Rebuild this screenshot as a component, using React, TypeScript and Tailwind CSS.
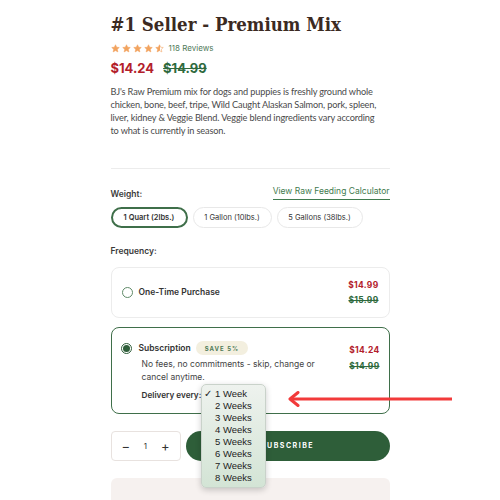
import React from "react";

const sans = "font-[family-name:'Inter','Liberation_Sans',sans-serif]";

function Star({ half = false }: { half?: boolean }) {
  return (
    <svg width="9" height="9" viewBox="0 0 24 24">
      <defs>
        <linearGradient id="halfStar">
          <stop offset="50%" stopColor="#f2a35e" />
          <stop offset="50%" stopColor="transparent" />
        </linearGradient>
      </defs>
      <path
        d="M12 2l3 6.5 7 .8-5.2 4.8 1.5 7L12 17.6 5.7 21.1l1.5-7L2 9.3l7-.8z"
        fill={half ? "url(#halfStar)" : "#f2a35e"}
        stroke="#f2a35e"
        strokeWidth="1.5"
        strokeLinejoin="round"
      />
    </svg>
  );
}

export default function App() {
  const weeks = ["1 Week", "2 Weeks", "3 Weeks", "4 Weeks", "5 Weeks", "6 Weeks", "7 Weeks", "8 Weeks"];
  return (
    <div className={`relative w-[500px] h-[500px] overflow-hidden bg-white ${sans}`}>
      <div className="mx-auto w-[279px] pt-[12px] flex flex-col">
        <h1 className="font-[family-name:'DejaVu_Serif_Condensed','DejaVu_Serif',serif] font-stretch-condensed font-bold text-[18.5px] leading-[26px] text-[#3b2a22] whitespace-nowrap">
          #1 Seller - Premium Mix
        </h1>
        <div className="flex items-center gap-[2px] mt-[4px]">
          <Star />
          <Star />
          <Star />
          <Star />
          <Star half />
          <span className="ml-[3px] text-[8px] text-[#4f7a58]">118 Reviews</span>
        </div>
        <div className="flex items-center gap-[9px] mt-[5px] text-[13px] font-bold">
          <span className="text-[#b3202b]">$14.24</span>
          <span className="text-[#2f6a3e] line-through">$14.99</span>
        </div>
        <p className="mt-[6px] font-[family-name:'Lato',sans-serif] text-[9.2px] leading-[13px] tracking-[-0.15px] text-[#4a4a4a] whitespace-nowrap">
          BJ's Raw Premium mix for dogs and puppies is freshly ground whole
          <br />
          chicken, bone, beef, tripe, Wild Caught Alaskan Salmon, pork, spleen,
          <br />
          liver, kidney &amp; Veggie Blend. Veggie blend ingredients vary according
          <br />
          to what is currently in season.
        </p>
        <div className="mt-[31px] h-px bg-[#ececec]" />

        <div className="mt-[16px] flex items-end justify-between">
          <span className="text-[8.5px] font-semibold text-[#3a3a3a]">Weight:</span>
          <span className="text-[8.5px] text-[#3f7a4e] border-b border-[#3f7a4e] pb-[2px]">View Raw Feeding Calculator</span>
        </div>
        <div className="mt-[7px] flex gap-[5px] text-[7.5px] text-[#333]">
          <div className="h-[21px] w-[77px] rounded-full border-2 border-[#3f6f4a] flex items-center justify-center font-semibold">1 Quart (2lbs.)</div>
          <div className="h-[21px] w-[79px] rounded-full border border-[#e8e8e8] flex items-center justify-center">1 Gallon (10lbs.)</div>
          <div className="h-[21px] w-[86px] rounded-full border border-[#e8e8e8] flex items-center justify-center">5 Gallons (38lbs.)</div>
        </div>

        <span className="mt-[17px] text-[8.5px] font-semibold text-[#3a3a3a]">Frequency:</span>

        <div className="mt-[9px] h-[51px] rounded-[8px] border border-[#ececec] flex items-center px-[10px]">
          <div className="w-[11px] h-[11px] rounded-full border border-[#5f8a68]" />
          <span className="ml-[6px] text-[8.5px] font-semibold text-[#333]">One-Time Purchase</span>
          <div className="ml-auto flex flex-col items-end gap-[2px] text-[8.5px] font-bold tracking-[0.3px]">
            <span className="text-[#b3202b]">$14.99</span>
            <span className="text-[#2f6a3e] line-through">$15.99</span>
          </div>
        </div>

        <div className="mt-[9px] h-[87px] rounded-[8px] border border-[#3f6f4a] px-[9px] pt-[13px] flex">
          <div className="w-[11px] h-[11px] mt-[2px] rounded-full border border-[#2f5e3a] flex items-center justify-center">
            <div className="w-[7px] h-[7px] rounded-full bg-[#2f5e3a]" />
          </div>
          <div className="ml-[7px] flex flex-col">
            <div className="flex items-center gap-[5px]">
              <span className="text-[8.5px] font-semibold text-[#333]">Subscription</span>
              <span className="h-[14px] px-[9px] rounded-full bg-[#f3efdf] text-[6px] font-bold tracking-[1px] text-[#4f7a58] flex items-center">SAVE 5%</span>
            </div>
            <p className="mt-[3px] ml-[3px] w-[180px] text-[8.5px] leading-[13px] text-[#444]">
              No fees, no commitments - skip, change or cancel anytime.
            </p>
            <span className="mt-[5px] ml-[3px] text-[8.2px] font-semibold text-[#333]">Delivery every:</span>
          </div>
          <div className="ml-auto mt-[3px] flex flex-col items-end gap-[3px] text-[8.5px] font-bold tracking-[0.3px]">
            <span className="text-[#b3202b]">$14.24</span>
            <span className="text-[#2f6a3e] line-through">$14.99</span>
          </div>
        </div>

        <div className="mt-[17px] flex gap-[5px]">
          <div className="w-[70px] h-[30px] rounded-[4px] border border-[#e8e2df] flex items-center justify-between px-[10px] text-[#333]">
            <span className="text-[13px] leading-none">−</span>
            <span className="text-[8px]">1</span>
            <span className="text-[13px] leading-none">+</span>
          </div>
          <div className="flex-1 h-[30px] rounded-full bg-[#2e5e39] flex items-center justify-center text-white text-[7px] font-bold tracking-[1.5px]">
            SUBSCRIBE
          </div>
        </div>

        <div className="mt-[17px] h-[30px] rounded-t-[6px] bg-[#f6f1ef]" />
      </div>

      <div className="absolute left-[201px] top-[384px] w-[65px] h-[104px] rounded-[5px] border border-[#c9d2ca] bg-gradient-to-b from-[#eef2ee] to-[#d3e4d5] shadow-[0_2px_6px_rgba(0,0,0,0.2)] pt-[3px] font-[family-name:'Liberation_Sans',sans-serif] text-[9.5px] text-[#222]">
        {weeks.map((w, i) => (
          <div key={w} className="h-[12px] leading-[12px] flex">
            <span className="w-[13px] text-right pr-[3px]">{i === 0 ? "✓" : ""}</span>
            <span>{w}</span>
          </div>
        ))}
      </div>

      <svg className="absolute left-[286px] top-[391px]" width="170" height="16" viewBox="0 0 170 16">
        <path d="M4 8 H166" stroke="#f23a3a" strokeWidth="3" />
        <path d="M12 1.5 L4 8 L12 14.5" stroke="#f23a3a" strokeWidth="3" fill="none" strokeLinecap="round" strokeLinejoin="round" />
      </svg>
    </div>
  );
}
